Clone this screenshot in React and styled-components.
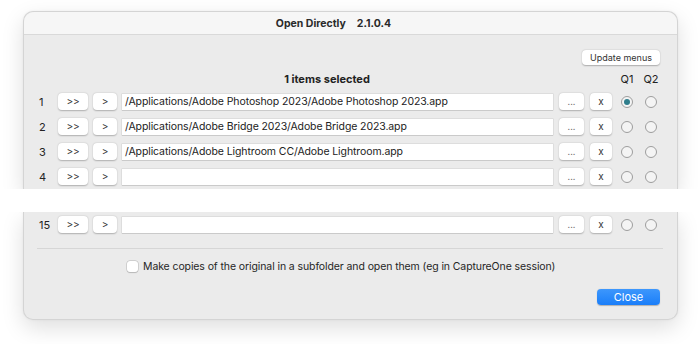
import styled, { createGlobalStyle } from "styled-components";

const GlobalStyle = createGlobalStyle`
  html, body {
    margin: 0;
    padding: 0;
    background: #ffffff;
  }
  body {
    font-family: Inter, "Noto Sans", "Liberation Sans", sans-serif;
    color: #262626;
    -webkit-font-smoothing: antialiased;
  }
`;

const Page = styled.div`
  width: 700px;
  height: 344px;
  padding-top: 11px;
  box-sizing: border-box;
  overflow: hidden;
`;

const Panel = styled.section`
  margin: 0 22px 0 23px;
  background: #ebebeb;
  border: 1px solid #d4d4d4;
  box-shadow: 0 8px 22px rgba(0, 0, 0, 0.13), 0 0 3px rgba(0, 0, 0, 0.05);
  ${(p) =>
    p.$part === "top"
      ? "border-bottom: none; border-radius: 10px 10px 0 0;"
      : "border-top: none; border-radius: 0 0 10px 10px;"}
`;

const Gap = styled.div`
  position: relative;
  z-index: 2;
  height: 23px;
  background: #ffffff;
`;

const TitleBar = styled.header`
  height: 22px;
  display: flex;
  align-items: center;
  justify-content: center;
  gap: 11px;
  padding-right: 34px;
  background: #f6f6f6;
  border-bottom: 1px solid #d9d9d9;
  border-radius: 10px 10px 0 0;
  font-size: 10.5px;
  font-weight: 700;
  color: #2a2a2a;
`;

const Toolbar = styled.div`
  display: flex;
  justify-content: flex-end;
  padding: 15px 17px 0 0;
  height: 15px;
`;

const SmallButton = styled.button`
  height: 15px;
  padding: 0 8px;
  border: none;
  border-radius: 4px;
  background: #ffffff;
  box-shadow: 0 0.5px 1.5px rgba(0, 0, 0, 0.28);
  font-family: inherit;
  font-size: 9px;
  color: #333;
  line-height: 15px;
`;

const Grid = styled.div`
  display: grid;
  grid-template-columns: 19px 35px 29px 1fr 31px 25px 24px 24px;
  align-items: center;
  padding: ${(p) => (p.$head ? "4px" : "0")} 14px 0 15px;
  height: ${(p) => (p.$head ? 20 : 25)}px;
`;

const HeaderTitle = styled.div`
  grid-column: 1 / 7;
  text-align: center;
  font-size: 11px;
  font-weight: 700;
  color: #222;
`;

const QLabel = styled.div`
  text-align: center;
  font-size: 11px;
  color: #222;
`;

const Num = styled.div`
  font-size: 11px;
  color: #222;
`;

const RowButton = styled.button`
  justify-self: start;
  width: ${(p) => p.$w}px;
  height: 17px;
  padding: 0;
  border: none;
  border-radius: 4px;
  background: #ffffff;
  box-shadow: 0 0.5px 1.5px rgba(0, 0, 0, 0.26);
  font-family: inherit;
  font-size: ${(p) => (p.$dim ? 9 : 10)}px;
  color: ${(p) => (p.$dim ? "#777" : "#333")};
  line-height: 17px;
`;

const PathField = styled.div`
  margin-right: 6px;
  height: 16px;
  padding: 0 3px;
  background: #ffffff;
  box-shadow: 0 0 0 0.5px #cfcfcf, 0 1px 0 #c4c4c4;
  font-size: 10.5px;
  letter-spacing: -0.1px;
  line-height: 16px;
  color: #222;
  white-space: nowrap;
  overflow: hidden;
`;

const RadioCell = styled.div`
  display: flex;
  justify-content: center;
`;

const Radio = styled.span`
  width: 10px;
  height: 10px;
  border-radius: 50%;
  border: 1px solid #9d9d9d;
  background: #f4f4f4;
  display: flex;
  align-items: center;
  justify-content: center;
  &::after {
    content: "";
    width: 6px;
    height: 6px;
    border-radius: 50%;
    background: ${(p) => (p.$on ? "#2f7e8c" : "transparent")};
  }
`;

const Separator = styled.hr`
  margin: 11px 14px 0 13px;
  border: none;
  border-top: 1px solid #d6d6d6;
`;

const CheckRow = styled.label`
  display: flex;
  align-items: center;
  gap: 5px;
  padding-left: 103px;
  margin-top: 11px;
  font-size: 10.5px;
  letter-spacing: -0.1px;
  color: #262626;
`;

const CheckBox = styled.span`
  width: 11px;
  height: 11px;
  border-radius: 3px;
  background: #ffffff;
  box-shadow: 0 0 0 0.5px #b8b8b8, 0 0.5px 1px rgba(0, 0, 0, 0.2);
`;

const Footer = styled.div`
  display: flex;
  justify-content: flex-end;
  padding: 16px 17px 14px 0;
`;

const CloseButton = styled.button`
  width: 63px;
  height: 16px;
  padding: 0;
  border: none;
  border-radius: 4px;
  background: linear-gradient(#3d97fc, #1a7ef9);
  box-shadow: 0 0.5px 1px rgba(0, 0, 0, 0.25);
  font-family: inherit;
  font-size: 11px;
  color: #ffffff;
  line-height: 16px;
`;

const rows = [
  { n: 1, path: "/Applications/Adobe Photoshop 2023/Adobe Photoshop 2023.app", q1: true },
  { n: 2, path: "/Applications/Adobe Bridge 2023/Adobe Bridge 2023.app" },
  { n: 3, path: "/Applications/Adobe Lightroom CC/Adobe Lightroom.app" },
  { n: 4, path: "" },
];

const AppRow = ({ n, path, q1 }) => (
  <Grid>
    <Num>{n}</Num>
    <RowButton $w={30}>&gt;&gt;</RowButton>
    <RowButton $w={24}>&gt;</RowButton>
    <PathField>{path}</PathField>
    <RowButton $w={25} $dim>...</RowButton>
    <RowButton $w={22}>x</RowButton>
    <RadioCell>
      <Radio $on={q1} />
    </RadioCell>
    <RadioCell>
      <Radio />
    </RadioCell>
  </Grid>
);

export default function App() {
  return (
    <Page>
      <GlobalStyle />
      <Panel $part="top">
        <TitleBar>
          <span>Open Directly</span>
          <span>2.1.0.4</span>
        </TitleBar>
        <Toolbar>
          <SmallButton>Update menus</SmallButton>
        </Toolbar>
        <Grid $head>
          <HeaderTitle>1 items selected</HeaderTitle>
          <QLabel>Q1</QLabel>
          <QLabel>Q2</QLabel>
        </Grid>
        {rows.map((r) => (
          <AppRow key={r.n} {...r} />
        ))}
      </Panel>
      <Gap />
      <Panel $part="bottom">
        <AppRow n={15} path="" />
        <Separator />
        <CheckRow>
          <CheckBox />
          Make copies of the original in a subfolder and open them (eg in CaptureOne session)
        </CheckRow>
        <Footer>
          <CloseButton>Close</CloseButton>
        </Footer>
      </Panel>
    </Page>
  );
}
